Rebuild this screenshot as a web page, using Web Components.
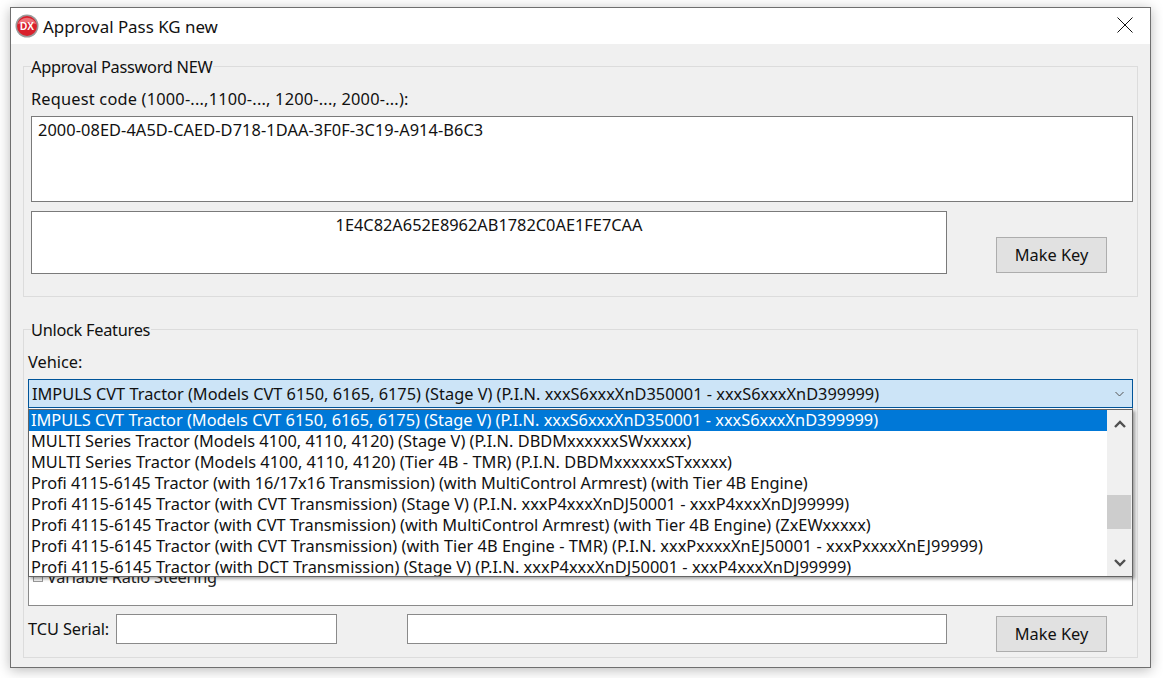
<!DOCTYPE html>
<html>
<head>
<meta charset="utf-8">
<title>Approval Pass KG new</title>
<style>
  html, body { margin: 0; height: 100%; background: #fff; overflow: hidden; }
  body {
    padding: 7px 12px 10px 10px;
    box-sizing: border-box;
    font: 16.35px/20px "Noto Sans", "Open Sans", sans-serif;
    color: #111;
    display: flex;
  }
</style>
</head>
<body>
<kg-window caption="Approval Pass KG new">
  <kg-group caption="Approval Password NEW" style="height:231px">
    <kg-label style="margin-top:21px;letter-spacing:.2px">Request code (1000-...,1100-..., 1200-..., 2000-...):</kg-label>
    <kg-field style="margin:6px 4px 0 7px;height:86px;letter-spacing:.08px">2000-08ED-4A5D-CAED-D718-1DAA-3F0F-3C19-A914-B6C3</kg-field>
    <kg-row style="margin-top:9px">
      <kg-field center style="width:916px;height:63px">1E4C82A652E8962AB1782C0AE1FE7CAA</kg-field>
      <kg-button style="margin:26px 0 0 49px">Make Key</kg-button>
    </kg-row>
  </kg-group>
  <kg-group caption="Unlock Features" style="height:329px;margin-top:32px">
    <kg-label style="margin-top:21px;padding-left:4px">Vehice:</kg-label>
    <kg-combo style="margin-top:6px"></kg-combo>
    <kg-checklist style="margin:-1px 4px 0 4px;height:199px"><span style="letter-spacing:-.2px">Variable Ratio Steering</span></kg-checklist>
    <kg-row style="margin-top:8px;padding-left:4px">
      <kg-label style="padding:0;width:88px;margin-top:4px;flex:none;letter-spacing:-.1px">TCU Serial:</kg-label>
      <kg-field small style="width:221px;height:30px"></kg-field>
      <kg-field small style="width:540px;height:30px;margin-left:70px"></kg-field>
      <kg-button style="margin:2px 0 0 49px">Make Key</kg-button>
    </kg-row>
  </kg-group>
</kg-window>

<script>
// window frame with title bar
class KgWindow extends HTMLElement {
  constructor() {
    super();
    this.attachShadow({ mode: "open" });
    this.shadowRoot.innerHTML = `
      <style>
        :host { display: flex; flex-direction: column; flex: 1; background: #f0f0f0; border: 1px solid #6f6f6f; box-shadow: 0 2px 12px rgba(0,0,0,.28); }
        .title { height: 36px; background: #fff; display: flex; align-items: center; padding-left: 4px; font-size: 16.9px; color: #111; flex: none; }
        .title svg.logo { margin-right: 4px; }
        .title span { flex: 1; margin-top: 2px; }
        .close { margin: 0 17px 2px 0; }
        .body { padding: 22px 12px 0 12px; display: flex; flex-direction: column; }
      </style>
      <div class="title">
        <svg class="logo" width="24" height="24" viewBox="0 0 24 24">
          <circle cx="12" cy="12" r="11.500" fill="#9a9a9a"/>
          <circle cx="12" cy="12" r="10" fill="#d9202c"/>
          <path d="M3 10a9.200 8 0 0 1 18 0q-9-3-18 0z" fill="#ee7077"/>
          <text x="12" y="15.500" text-anchor="middle" font-family="Liberation Sans" font-weight="700" font-size="10" fill="#fff">DX</text>
        </svg>
        <span>${this.getAttribute("caption")}</span>
        <svg class="close" width="16" height="16" viewBox="0 0 16 16"><path d="M.5.5l15 15M15.500.5l-15 15" stroke="#111" fill="none"/></svg>
      </div>
      <div class="body"><slot></slot></div>`;
  }
}
customElements.define("kg-window", KgWindow);

class KgGroup extends HTMLElement {
  constructor() {
    super();
    this.attachShadow({ mode: "open" });
    this.shadowRoot.innerHTML = `
      <style>
        :host { display: block; position: relative; border: 1px solid #dcdcdc; box-sizing: border-box; }
        .cap { position: absolute; left: 7px; top: -10px; background: #f0f0f0; height: 20px; padding-right: 1px; white-space: nowrap; letter-spacing: -.28px; }
        .in { display: flex; flex-direction: column; }
      </style>
      <div class="cap">${this.getAttribute("caption")}</div>
      <div class="in"><slot></slot></div>`;
  }
}
customElements.define("kg-group", KgGroup);

class KgLabel extends HTMLElement {
  constructor() {
    super();
    this.attachShadow({ mode: "open" });
    this.shadowRoot.innerHTML = `<style>:host { display: block; padding-left: 7px; line-height: 22px; white-space: nowrap; }</style><slot></slot>`;
  }
}
customElements.define("kg-label", KgLabel);

class KgRow extends HTMLElement {
  constructor() {
    super();
    this.attachShadow({ mode: "open" });
    this.shadowRoot.innerHTML = `<style>:host { display: flex; align-items: flex-start; padding-left: 7px; }</style><slot></slot>`;
  }
}
customElements.define("kg-row", KgRow);

class KgField extends HTMLElement {
  constructor() {
    super();
    this.attachShadow({ mode: "open" });
    this.shadowRoot.innerHTML = `
      <style>
        :host { display: block; box-sizing: border-box; background: #fff; border: 1px solid #7a7a7a; padding: 3px 6px; line-height: 20px; color: #111; flex: none; }
        :host([center]) { text-align: center; }
        :host([small]) { border-color: #8a8a8a; }
      </style><slot></slot>`;
  }
}
customElements.define("kg-field", KgField);

class KgButton extends HTMLElement {
  constructor() {
    super();
    this.attachShadow({ mode: "open" });
    this.shadowRoot.innerHTML = `
      <style>
        :host { display: flex; align-items: center; justify-content: center; box-sizing: border-box; width: 111px; height: 36px; background: #e1e1e1; border: 1px solid #adadad; flex: none; color: #111; }
      </style><slot></slot>`;
  }
}
customElements.define("kg-button", KgButton);

// text, letter spacing that brings the row to the width it has in the reference
const VEHICLES = [
  ["IMPULS CVT Tractor (Models CVT 6150, 6165, 6175) (Stage V) (P.I.N. xxxS6xxxXnD350001 - xxxS6xxxXnD399999)", 0],
  ["MULTI Series Tractor (Models 4100, 4110, 4120) (Stage V) (P.I.N. DBDMxxxxxxSWxxxxx)", .01],
  ["MULTI Series Tractor (Models 4100, 4110, 4120) (Tier 4B - TMR) (P.I.N. DBDMxxxxxxSTxxxxx)", .045],
  ["Profi 4115-6145 Tractor (with 16/17x16 Transmission) (with MultiControl Armrest) (with Tier 4B Engine)", -.05],
  ["Profi 4115-6145 Tractor (with CVT Transmission) (Stage V) (P.I.N. xxxP4xxxXnDJ50001 - xxxP4xxxXnDJ99999)", .03],
  ["Profi 4115-6145 Tractor (with CVT Transmission) (with MultiControl Armrest) (with Tier 4B Engine) (ZxEWxxxxx)", 0],
  ["Profi 4115-6145 Tractor (with CVT Transmission) (with Tier 4B Engine - TMR) (P.I.N. xxxPxxxxXnEJ50001 - xxxPxxxxXnEJ99999)", .03],
  ["Profi 4115-6145 Tractor (with DCT Transmission) (Stage V) (P.I.N. xxxP4xxxXnDJ50001 - xxxP4xxxXnDJ99999)", .03]
];

// combo box, the list is open in the reference so it hangs over the checklist
class KgCombo extends HTMLElement {
  constructor() {
    super();
    this.attachShadow({ mode: "open" });
    const rows = VEHICLES.map(([v, ls], i) => `<div class="item${i === 0 ? " sel" : ""}" style="letter-spacing:${ls}px">${v}</div>`).join("");
    this.shadowRoot.innerHTML = `
      <style>
        :host { display: block; position: relative; margin: 0 4px; z-index: 2; }
        .box { height: 29px; box-sizing: border-box; background: #cce4f7; border: 1px solid #005499; display: flex; align-items: center; padding: 0 8px 0 3px; white-space: nowrap; color: #111; }
        .box span { flex: 1; }
        .pop { position: absolute; left: 0; right: 0; top: 30px; height: 168px; box-sizing: border-box; background: #fff; border: 1px solid #646464; box-shadow: 2px 2px 3px rgba(0,0,0,.35); display: flex; }
        .list { flex: 1; min-width: 0; overflow: hidden; }
        .item { height: 21px; line-height: 21px; padding-left: 2px; white-space: nowrap; }
        .sel { background: #0078d7; color: #fff; }
        .bar { width: 25px; background: #f0f0f0; display: flex; flex-direction: column; align-items: center; flex: none; }
        .btn { width: 100%; display: flex; align-items: center; justify-content: center; flex: none; }
        .up { height: 28px; }
        .down { height: 26px; }
        .track { flex: 1; padding-top: 57px; width: 100%; }
        .thumb { height: 34px; width: 24px; background: #cdcdcd; }
      </style>
      <div class="box"><span>${VEHICLES[0][0]}</span>
        <svg width="9" height="6" viewBox="0 0 9 6"><path d="M.5 1l4 4 4-4" fill="none" stroke="#555"/></svg></div>
      <div class="pop">
        <div class="list">${rows}</div>
        <div class="bar">
          <div class="btn up"><svg width="12" height="8" viewBox="0 0 12 8"><path d="M1 7l5-5 5 5" fill="none" stroke="#505050" stroke-width="2.400"/></svg></div>
          <div class="track"><div class="thumb"></div></div>
          <div class="btn down"><svg width="12" height="8" viewBox="0 0 12 8"><path d="M1 1l5 5 5-5" fill="none" stroke="#505050" stroke-width="2.400"/></svg></div>
        </div>
      </div>`;
  }
}
customElements.define("kg-combo", KgCombo);

class KgChecklist extends HTMLElement {
  constructor() {
    super();
    this.attachShadow({ mode: "open" });
    this.shadowRoot.innerHTML = `
      <style>
        :host { display: flex; flex-direction: column; justify-content: flex-end; box-sizing: border-box; background: #fff; border: 1px solid #8a8a8a; padding: 0 0 18px 4px; line-height: 20px; color: #222; }
        .row { display: flex; align-items: center; gap: 4px; }
        .cb { width: 10px; height: 10px; border: 1px solid #999; background: #f4f4f4; box-sizing: border-box; }
      </style>
      <div class="row"><div class="cb"></div><slot></slot></div>`;
  }
}
customElements.define("kg-checklist", KgChecklist);
</script>
</body>
</html>
